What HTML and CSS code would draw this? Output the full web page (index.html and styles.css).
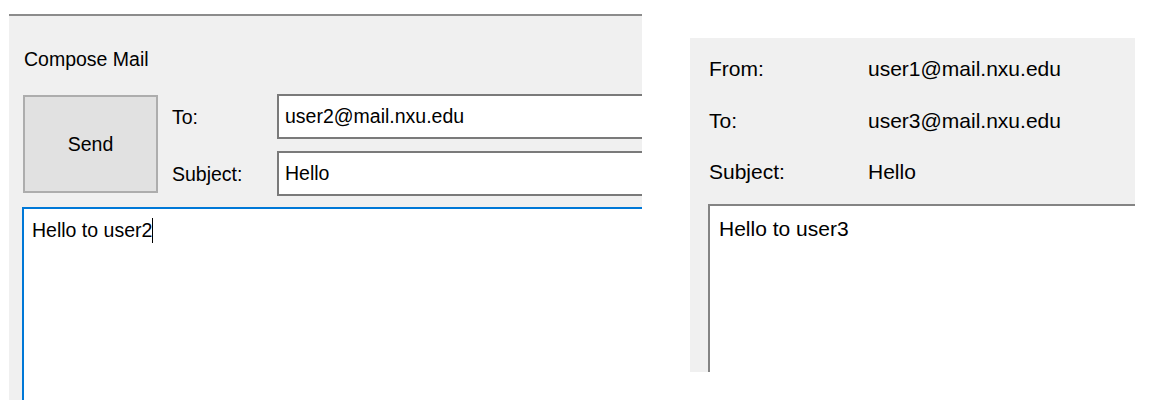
FILE: index.html
```html
<!DOCTYPE html>
<html>
<head>
<meta charset="utf-8">
<link rel="stylesheet" href="styles.css">
</head>
<body>
<div class="page">
  <section class="compose">
    <div class="title">Compose Mail</div>
    <div class="header">
      <div class="send">Send</div>
      <div class="fields">
        <div class="label">To:</div>
        <div class="input">user2@mail.nxu.edu</div>
        <div class="label">Subject:</div>
        <div class="input">Hello</div>
      </div>
    </div>
    <div class="body-box focused">Hello to user2<span class="caret"></span></div>
  </section>
  <section class="viewer">
    <div class="meta">
      <div class="mlabel">From:</div><div class="mvalue">user1@mail.nxu.edu</div>
      <div class="mlabel">To:</div><div class="mvalue">user3@mail.nxu.edu</div>
      <div class="mlabel">Subject:</div><div class="mvalue">Hello</div>
    </div>
    <div class="view-box">Hello to user3</div>
  </section>
</div>
</body>
</html>
```
FILE: styles.css
```css
html, body {
  margin: 0;
  padding: 0;
  background: #ffffff;
}
body {
  font-family: "Liberation Sans", Arial, sans-serif;
  color: #000;
  width: 1149px;
  height: 420px;
  overflow: hidden;
}
.page {
  display: flex;
  align-items: flex-start;
}
.compose {
  margin-top: 14px;
  margin-left: 9px;
  width: 633px;
  height: 386px;
  box-sizing: border-box;
  border-top: 2px solid #8c8c8c;
  background: #f0f0f0;
  overflow: hidden;
  padding-left: 13px;
  font-size: 19.5px;
}
.title {
  margin-top: 32px;
  margin-left: 2px;
  line-height: 22px;
  height: 22px;
}
.header {
  display: flex;
  margin-top: 24px;
}
.send {
  margin-top: 1px;
  margin-left: 1px;
  width: 135px;
  height: 98px;
  box-sizing: border-box;
  border: 2px solid #adadad;
  background: #e1e1e1;
  display: flex;
  align-items: center;
  justify-content: center;
  flex: none;
}
.fields {
  margin-left: 14px;
  display: grid;
  grid-template-columns: 105px 600px;
  grid-auto-rows: 45px;
  row-gap: 12px;
  align-items: center;
}
.label {
  line-height: 24px;
}
.input {
  height: 45px;
  box-sizing: border-box;
  border: 2px solid #7a7a7a;
  background: #fff;
  padding-left: 6px;
  line-height: 41px;
  white-space: nowrap;
}
.body-box {
  margin-top: 11px;
  width: 700px;
  height: 300px;
  box-sizing: border-box;
  border: 2px solid #0078d7;
  background: #fff;
  padding: 9px 8px;
  line-height: 24px;
}
.caret {
  display: inline-block;
  width: 1px;
  height: 25px;
  background: #000;
  vertical-align: top;
}
.viewer {
  margin-top: 38px;
  margin-left: 48px;
  width: 445px;
  height: 334px;
  background: #f0f0f0;
  overflow: hidden;
  padding: 19px 0 0 18px;
  box-sizing: border-box;
  font-size: 21px;
}
.meta {
  display: grid;
  grid-template-columns: 159px 1fr;
  grid-auto-rows: 24px;
  row-gap: 27.5px;
  line-height: 24px;
  padding-left: 1px;
}
.view-box {
  margin-top: 20px;
  width: 500px;
  height: 300px;
  box-sizing: border-box;
  border: 2px solid #848484;
  background: #fff;
  padding: 11px 9px;
  line-height: 24px;
}
```
